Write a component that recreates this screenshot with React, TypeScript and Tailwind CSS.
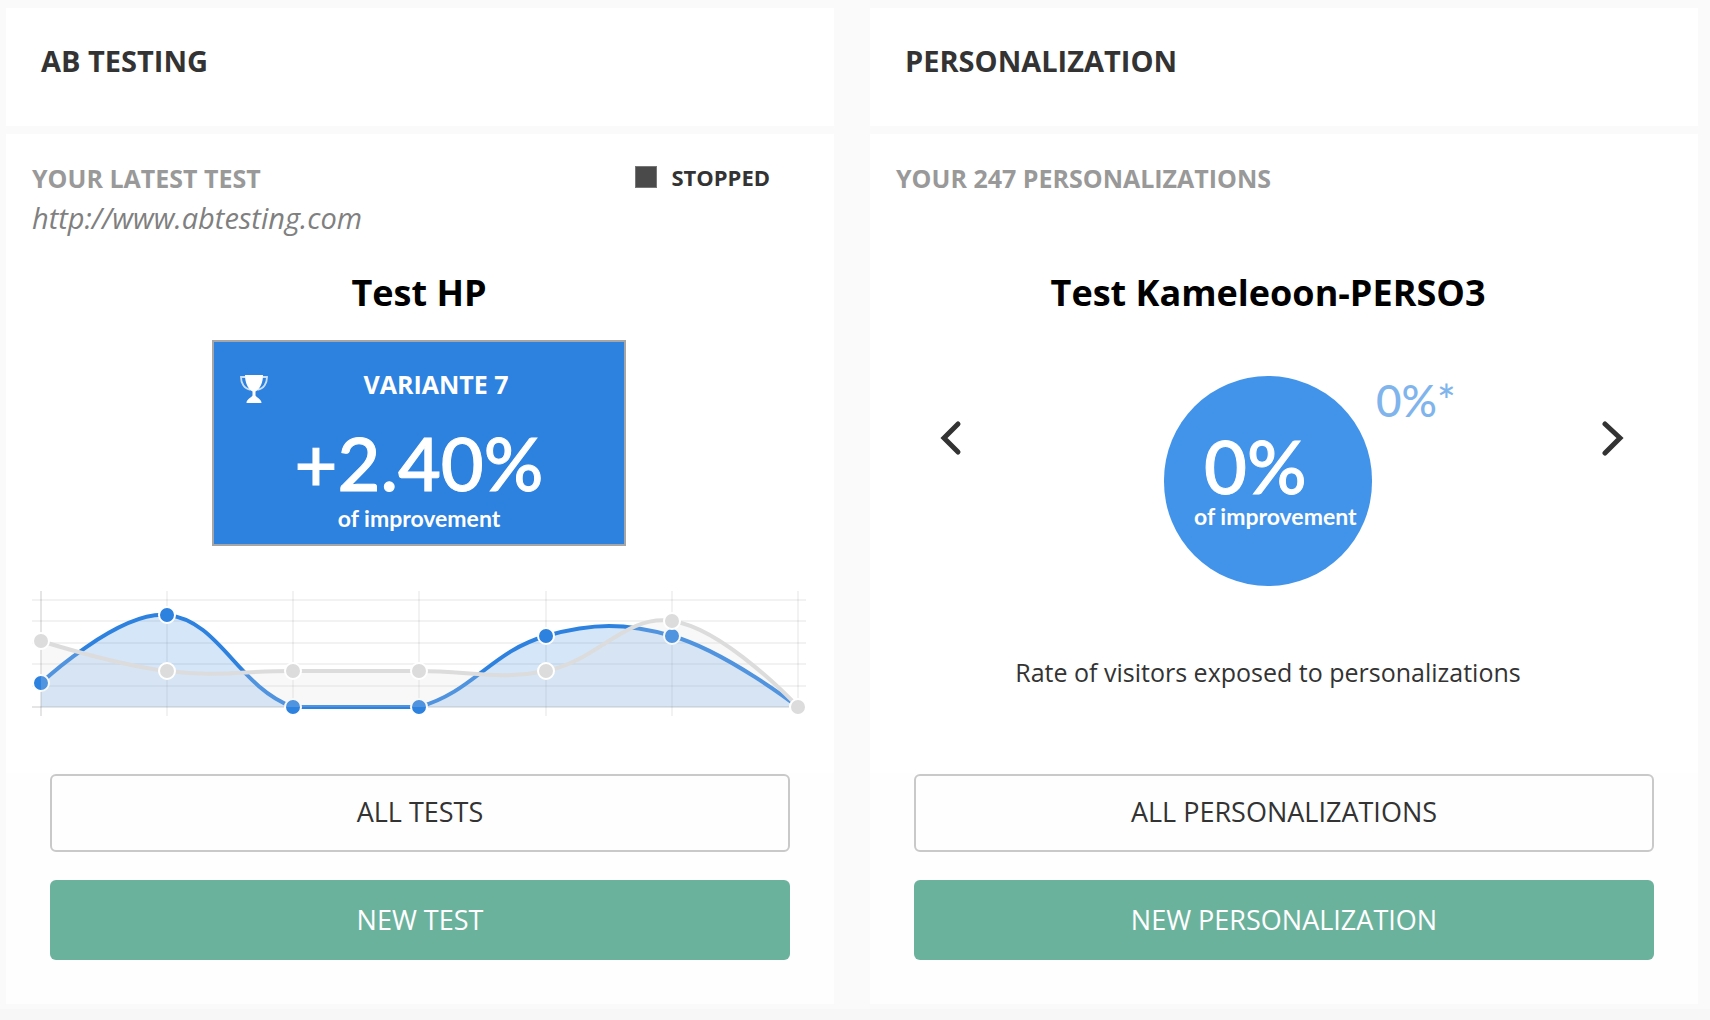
import { useState } from 'react';
import type { ReactNode } from 'react';

type Point = { x: number; y: number };

const xs = [9, 135, 261, 387, 514, 640, 766];
const gridRows = [9, 30, 52, 73, 95];
const baseLine = 116;

const variantValues = [92, 24, 116, 116, 45, 45, 116];
const originalValues = [50, 80, 80, 80, 80, 30, 116];

const tests = ['Test Kameleoon-PERSO3'];

function toPoints(values: number[]): Point[] {
  return values.map((y, i) => ({ x: xs[i], y }));
}

// Smooth line through the points, control points follow the neighbours
function curvePath(points: Point[]) {
  const handles = points.map((p, i) => {
    const prev = points[i - 1];
    const next = points[i + 1];
    if (!prev || !next) return { before: p, after: p };
    const d1 = Math.hypot(p.x - prev.x, p.y - prev.y);
    const d2 = Math.hypot(next.x - p.x, next.y - p.y);
    const a = (0.4 * d1) / (d1 + d2);
    const b = (0.4 * d2) / (d1 + d2);
    return {
      before: { x: p.x - a * (next.x - prev.x), y: p.y - a * (next.y - prev.y) },
      after: {
        x: p.x + b * (next.x - prev.x),
        y: Math.min(baseLine, p.y + b * (next.y - prev.y)),
      },
    };
  });

  return points.reduce((path, p, i) => {
    if (i === 0) return `M${p.x} ${p.y}`;
    const c1 = handles[i - 1].after;
    const c2 = { x: handles[i].before.x, y: Math.min(baseLine, handles[i].before.y) };
    return `${path} C${c1.x} ${c1.y} ${c2.x} ${c2.y} ${p.x} ${p.y}`;
  }, '');
}

function Series({ values, color, fill }: { values: number[]; color: string; fill: string }) {
  const points = toPoints(values);
  const path = curvePath(points);

  return (
    <g>
      <path d={`${path} L766 ${baseLine} L9 ${baseLine} Z`} fill={fill} />
      <path d={path} fill="none" stroke={color} strokeWidth="4" />
      {points.map((p) => (
        <circle key={p.x} cx={p.x} cy={p.y} r="8" fill={color} stroke="#fff" strokeWidth="2" />
      ))}
    </g>
  );
}

function Chart() {
  return (
    <svg viewBox="0 0 774 126" className="mt-[45px] block w-full" role="img" aria-label="Conversion chart">
      {gridRows.map((y) => (
        <path key={y} d={`M0 ${y}H774`} stroke="#000" strokeOpacity="0.05" strokeWidth="2" />
      ))}
      <path d={`M0 ${baseLine}H774`} stroke="#000" strokeOpacity="0.1" strokeWidth="2" />
      {xs.map((x, i) => (
        <path key={x} d={`M${x} 0V125`} stroke="#000" strokeOpacity={i === 0 ? 0.1 : 0.05} strokeWidth="2" />
      ))}
      <Series values={variantValues} color="#2d81df" fill="rgba(45,129,223,0.2)" />
      <Series values={originalValues} color="#dcdcdc" fill="rgba(220,220,220,0.2)" />
    </svg>
  );
}

function Trophy() {
  return (
    <svg viewBox="0 0 28 28" className="mt-[3px] h-7 w-7" fill="#fff" aria-hidden="true">
      <path d="M5 0h18c0 8-3 14-7.500 16.500v4c1 2 6 3.500 6 7.500h-15c0-4 5-5.500 6-7.500v-4C8 14 5 8 5 0z" />
      <path d="M5.500 2H1c0 6 3 12 9.500 12.800M22.500 2H27c0 6-3 12-9.500 12.800" fill="none" stroke="#fff" strokeOpacity="0.75" strokeWidth="1.800" />
    </svg>
  );
}

function Panel({ title, actions, children }: { title: string; actions: [string, string]; children: ReactNode }) {
  return (
    <section className="flex flex-1 flex-col gap-2">
      <header className="bg-white px-[35px] pt-[33px] pb-[45px]">
        <h2 className="text-[29px] leading-10 font-bold text-[#333]">{title}</h2>
      </header>
      <div className="flex flex-1 flex-col bg-white">
        <div className="flex-1 pt-6 pr-7 pb-14 pl-[26px]">{children}</div>
        <div className="flex flex-col gap-7 bg-[#fefefe] px-11 pt-px pb-11">
          <button type="button" className="h-[78px] rounded-md border-2 border-[#c9c9c9] pb-0.5 text-[27px] text-[#333]">
            {actions[0]}
          </button>
          <button type="button" className="h-20 rounded-md bg-[#6bb29d] text-[27px] text-white">
            {actions[1]}
          </button>
        </div>
      </div>
    </section>
  );
}

export default function App() {
  const [current, setCurrent] = useState(0);
  const move = (step: number) => setCurrent((current + step + tests.length) % tests.length);

  return (
    <main className="flex min-h-screen flex-col bg-[#fafafa] font-['Open_Sans',sans-serif]">
      <div className="flex gap-9 pt-2 pr-3 pb-[5px] pl-[6px]">
        <Panel title="AB TESTING" actions={['ALL TESTS', 'NEW TEST']}>
          <div className="flex items-start justify-between pr-9">
            <h3 className="text-[25px] leading-10 font-bold text-[#999]">YOUR LATEST TEST</h3>
            <p className="flex items-center gap-[14px] text-[22px] leading-[38px] font-bold text-[#333]">
              <span className="h-[22px] w-[22px] border border-[#777] bg-[#4a4a4a]" />
              STOPPED
            </p>
          </div>
          <a href="http://www.abtesting.com" className="block text-[29px] leading-10 text-[#808080] italic">
            http://www.abtesting.com
          </a>
          <h4 className="mt-[35px] text-center text-[36px] leading-10 font-bold text-black">Test HP</h4>
          <div className="mx-auto mt-[27px] h-[206px] w-[414px] border-2 border-[#a6a6a6] bg-[#2d81df] text-white">
            <div className="flex pt-[30px] pl-[26px]">
              <Trophy />
              <p className="flex-1 pr-9 pl-4 text-center text-[25px] leading-6 font-bold">VARIANTE 7</p>
            </div>
            <p className="mt-7 text-center font-[Lato] text-[74px] leading-16 font-medium [-webkit-text-stroke:1px]">+2.40%</p>
            <p className="mt-[7px] text-center font-[Lato] text-[23px] leading-8 font-bold">of improvement</p>
          </div>
          <Chart />
        </Panel>

        <Panel title="PERSONALIZATION" actions={['ALL PERSONALIZATIONS', 'NEW PERSONALIZATION']}>
          <h3 className="text-[25px] leading-10 font-bold text-[#999]">YOUR 247 PERSONALIZATIONS</h3>
          <div className="mt-[75px] pr-[30px]">
            <h4 className="text-center text-[36px] leading-10 font-bold text-black">{tests[current]}</h4>
            <div className="mt-[63px] grid grid-cols-[1fr_auto_1fr] items-start">
              <button type="button" aria-label="Previous" onClick={() => move(-1)} className="mt-11 ml-11 w-6">
                <svg viewBox="0 0 24 36" className="h-9 w-6" fill="none" stroke="#333" strokeWidth="5">
                  <path d="M18 4 4 18 18 32" strokeLinecap="round" />
                </svg>
              </button>
              <div className="relative h-[210px] w-[208px] rounded-full bg-[#4294eb] pt-[58px] pl-[30px] text-white">
                <p className="pl-[10px] font-[Lato] text-[74px] leading-16 font-medium [-webkit-text-stroke:1px]">0%</p>
                <p className="mt-0.5 font-[Lato] text-[23px] leading-8 font-bold whitespace-nowrap">of improvement</p>
                <span className="absolute top-0 left-full ml-1 font-[Lato] text-[44px] leading-12 font-medium text-[#80b4ed]">0%*</span>
              </div>
              <button type="button" aria-label="Next" onClick={() => move(1)} className="mt-11 mr-4 w-6 justify-self-end">
                <svg viewBox="0 0 24 36" className="h-9 w-6" fill="none" stroke="#333" strokeWidth="5">
                  <path d="M5 4 20 18 5 33" strokeLinecap="round" />
                </svg>
              </button>
            </div>
            <p className="mt-[66px] text-center text-[25px] leading-10 text-[#333]">
              Rate of visitors exposed to personalizations
            </p>
          </div>
        </Panel>
      </div>
      <div className="flex-1 bg-[#f7f7f7]" />
    </main>
  );
}
